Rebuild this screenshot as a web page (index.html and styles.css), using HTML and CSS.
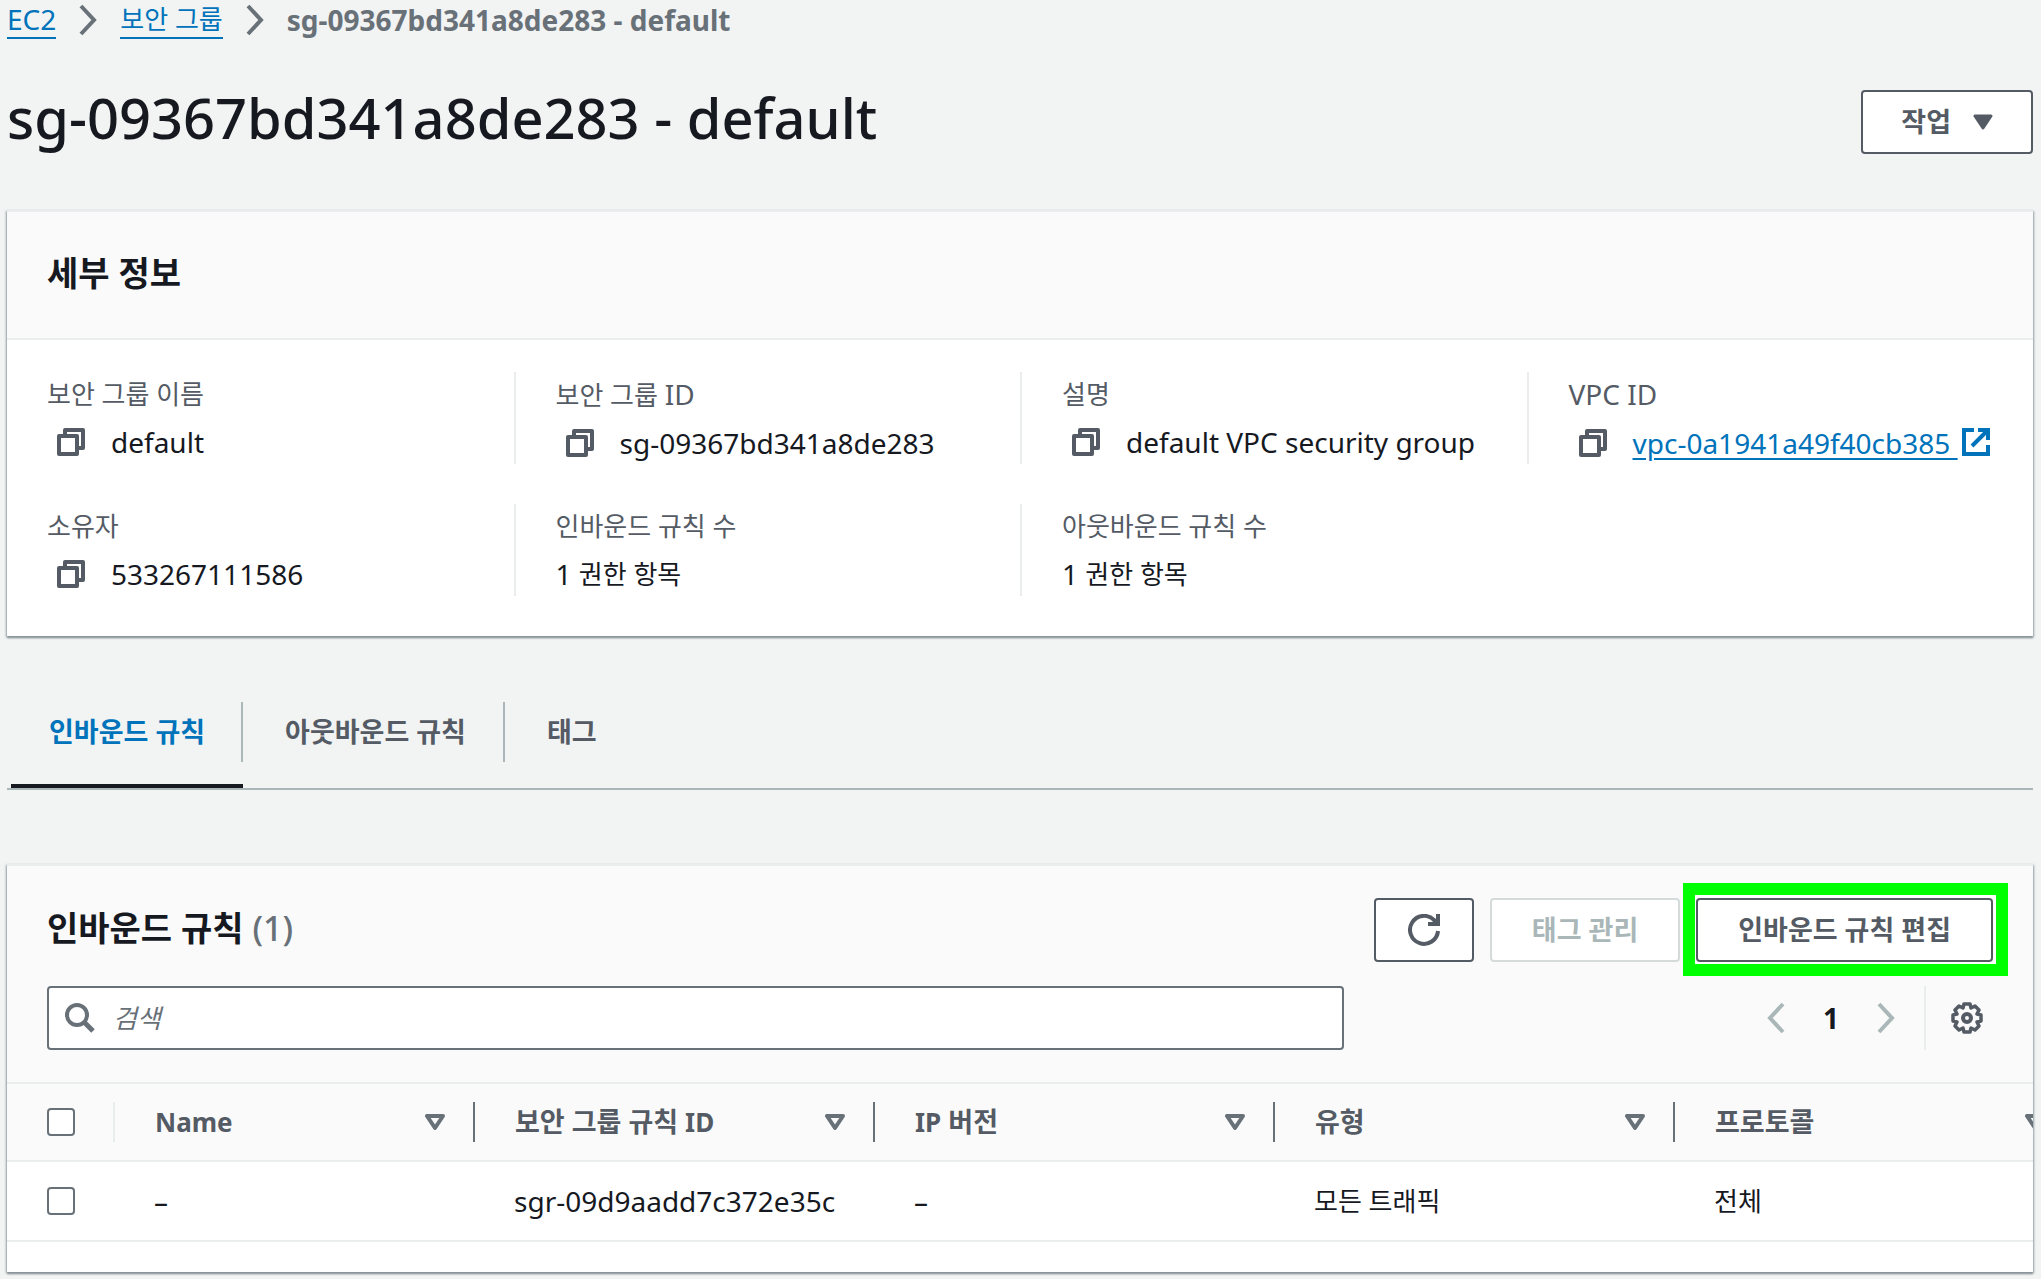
FILE: index.html
```html
<!DOCTYPE html>
<html lang="ko">
<head>
<meta charset="utf-8">
<title>sg-09367bd341a8de283 - default</title>
<link rel="stylesheet" href="styles.css">
</head>
<body>
<svg class="sprite" aria-hidden="true">
  <symbol id="i-copy" viewBox="0 0 28 28"><path d="M2 8h18v18H2zM8 8V2h18v18h-6" fill="none" stroke="currentColor" stroke-width="4" stroke-linejoin="round"/></symbol>
  <symbol id="i-sort" viewBox="0 0 20 18"><path d="M2 3h16l-8 12z" fill="none" stroke="currentColor" stroke-width="4" stroke-linejoin="round"/></symbol>
  <symbol id="i-next" viewBox="0 0 20 32"><path d="M3 2l13 14L3 30" fill="none" stroke="currentColor" stroke-width="4"/></symbol>
</svg>

<nav class="crumbs" aria-label="breadcrumb">
  <a class="crumb-link" href="#">EC2</a>
  <svg class="chevron"><use href="#i-next"/></svg>
  <a class="crumb-link ko" href="#">보안 그룹</a>
  <svg class="chevron"><use href="#i-next"/></svg>
  <span class="crumb-current">sg-09367bd341a8de283 - default</span>
</nav>

<main class="page">
  <header class="page-head">
    <h1 class="title">sg-09367bd341a8de283 - default</h1>
    <button class="btn btn-menu" type="button">작업
      <svg class="caret" viewBox="0 0 20 16"><path d="M2 2h16l-8 12z" fill="currentColor" stroke="currentColor" stroke-width="3" stroke-linejoin="round"/></svg>
    </button>
  </header>

  <section class="card">
    <header class="card-head"><h2 class="card-title">세부 정보</h2></header>
    <dl class="details">
      <div class="item"><dt class="label">보안 그룹 이름</dt><dd class="value"><button class="copy" type="button" aria-label="복사"><svg class="icon-small"><use href="#i-copy"/></svg></button>default</dd></div>
      <div class="item"><dt class="label">보안 그룹 <span class="latin">ID</span></dt><dd class="value"><button class="copy" type="button" aria-label="복사"><svg class="icon-small"><use href="#i-copy"/></svg></button>sg-09367bd341a8de283</dd></div>
      <div class="item"><dt class="label">설명</dt><dd class="value"><button class="copy" type="button" aria-label="복사"><svg class="icon-small"><use href="#i-copy"/></svg></button>default VPC security group</dd></div>
      <div class="item"><dt class="label"><span class="latin">VPC ID</span></dt><dd class="value"><button class="copy" type="button" aria-label="복사"><svg class="icon-small"><use href="#i-copy"/></svg></button><a class="link" href="#">vpc-0a1941a49f40cb385 <svg class="external" viewBox="0 0 28 28"><path d="M12 2H2v24h24v-9M16 2h10v10M26 2L10 18" fill="none" stroke="currentColor" stroke-width="4"/></svg></a></dd></div>
      <div class="item"><dt class="label">소유자</dt><dd class="value"><button class="copy" type="button" aria-label="복사"><svg class="icon-small"><use href="#i-copy"/></svg></button>533267111586</dd></div>
      <div class="item"><dt class="label">인바운드 규칙 수</dt><dd class="value ko"><span class="latin">1 </span>권한 항목</dd></div>
      <div class="item"><dt class="label">아웃바운드 규칙 수</dt><dd class="value ko"><span class="latin">1 </span>권한 항목</dd></div>
    </dl>
  </section>

  <div class="tabs" role="tablist">
    <button class="tab tab-active" type="button" role="tab" aria-selected="true"><span class="tab-text">인바운드 규칙</span></button>
    <button class="tab" type="button" role="tab" aria-selected="false"><span class="tab-text">아웃바운드 규칙</span></button>
    <button class="tab" type="button" role="tab" aria-selected="false"><span class="tab-text">태그</span></button>
  </div>

  <section class="card rules">
    <header class="rules-head">
      <div class="rules-row">
        <h2 class="card-title">인바운드 규칙 <span class="count">(1)</span></h2>
        <div class="actions">
          <button class="btn btn-icon" type="button" aria-label="새로 고침"><svg class="icon" viewBox="0 0 32 32"><path d="M30 17a14 14 0 1 1-4-11l4 4M30 0v10H20" fill="none" stroke="currentColor" stroke-width="4"/><path d="M30 3v7h-7z" fill="currentColor"/></svg></button>
          <button class="btn" type="button" disabled>태그 관리</button>
          <button class="btn btn-marked" type="button">인바운드 규칙 편집</button>
        </div>
      </div>
      <div class="rules-row">
        <div class="search">
          <svg class="icon" viewBox="0 0 32 32"><path d="M20 20l9 9" fill="none" stroke="currentColor" stroke-width="5"/><circle cx="13" cy="13" r="10" fill="none" stroke="currentColor" stroke-width="4"/></svg>
          <input class="search-input" type="text" placeholder="검색" aria-label="검색">
        </div>
        <div class="pager">
          <button class="page-btn" type="button" aria-label="이전" disabled><svg class="chevron flip"><use href="#i-next"/></svg></button>
          <span class="page-num">1</span>
          <button class="page-btn" type="button" aria-label="다음" disabled><svg class="chevron"><use href="#i-next"/></svg></button>
          <button class="settings" type="button" aria-label="설정"><svg class="icon" viewBox="0 0 32 32"><path d="M13 2h6l1 4 4-2 4 4-2 4 4 1v6l-4 1 2 4-4 4-4-2-1 4h-6l-1-4-4 2-4-4 2-4-4-1v-6l4-1-2-4 4-4 4 2z" fill="none" stroke="currentColor" stroke-width="3.5" stroke-linejoin="round"/><circle cx="16" cy="16" r="4" fill="none" stroke="currentColor" stroke-width="4"/></svg></button>
        </div>
      </div>
    </header>
    <div class="table-wrap">
      <table class="table">
        <thead>
          <tr>
            <th class="check-cell"><input class="check" type="checkbox" aria-label="모두 선택"></th>
            <th class="name-cell"><div class="th"><span class="th-latin">Name</span><svg class="sort"><use href="#i-sort"/></svg></div></th>
            <th><div class="th"><span>보안 그룹 규칙 <span class="th-latin">ID</span></span><svg class="sort"><use href="#i-sort"/></svg></div></th>
            <th><div class="th"><span><span class="th-latin">IP</span> 버전</span><svg class="sort"><use href="#i-sort"/></svg></div></th>
            <th><div class="th"><span>유형</span><svg class="sort"><use href="#i-sort"/></svg></div></th>
            <th><div class="th"><span>프로토콜</span><svg class="sort"><use href="#i-sort"/></svg></div></th>
          </tr>
        </thead>
        <tbody>
          <tr>
            <td class="check-cell"><input class="check" type="checkbox" aria-label="규칙 선택"></td>
            <td>–</td>
            <td>sgr-09d9aadd7c372e35c</td>
            <td>–</td>
            <td class="ko">모든 트래픽</td>
            <td class="ko">전체</td>
          </tr>
        </tbody>
      </table>
    </div>
  </section>
</main>
</body>
</html>
```
FILE: styles.css
```css
* { box-sizing: border-box; }
body {
  margin: 0;
  background: #f2f3f3;
  color: #16191f;
  font: 28px/44px "Noto Sans", "Noto Sans CJK KR", sans-serif;
}
button, input { font: inherit; color: inherit; margin: 0; }
h1, h2, dl, dd { margin: 0; }
.sprite { display: none; }
.ko { font-size: 26px; }
.latin { font-size: 28px; }
.icon { width: 32px; height: 32px; flex: none; }
.icon-small { width: 28px; height: 28px; flex: none; }
.chevron { width: 20px; height: 32px; flex: none; }
.flip { transform: scaleX(-1); }

.crumbs { display: flex; align-items: center; gap: 22px; height: 40px; padding: 0 7px; color: #687078; }
.crumb-link { color: #0073bb; text-decoration: none; border-bottom: 2px solid; line-height: 36px; }
.crumb-current { font-weight: 700; }

.page { padding: 0 8px 7px 7px; }
.page-head { display: flex; justify-content: space-between; align-items: flex-start; padding: 50px 0 56px; }
.title { font-size: 56px; line-height: 54px; font-weight: 500; }

.btn {
  display: inline-flex; align-items: center; justify-content: center; gap: 20px;
  height: 64px; padding: 0 40px;
  background: #fff; color: #545b64;
  border: 2px solid; border-radius: 4px;
  font-size: 27px; font-weight: 700; white-space: nowrap;
}
.btn:disabled { color: #aab7b8; border-color: #d5dbdb; }
.btn-icon { width: 100px; padding: 0; }
.btn-menu { gap: 22px; padding: 0 38px; }
.caret { width: 20px; height: 16px; }

/* highlight frame laid over the edit button */
.btn-marked { position: relative; box-shadow: 0 0 0 4px #fff; }
.btn-marked::after {
  content: ""; position: absolute; inset: -17px -17px -16px -15px;
  border: 12px solid #00ff00; pointer-events: none;
}

.card {
  background: #fff; border-top: 2px solid #eaeded;
  box-shadow: 0 2px 2px #879196, 1px 1px 2px #aab7b8, -1px 1px 2px #aab7b8;
}
.card-head { background: #fafafa; border-bottom: 2px solid #eaeded; padding: 38px 40px; }
.card-title { padding-bottom: 4px; font-size: 34px; line-height: 46px; font-weight: 700; }
.count { color: #687078; font-weight: 500; }

.details { display: grid; grid-template-columns: repeat(4, 1fr); row-gap: 40px; padding: 32px 0 40px; }
.item { padding-left: 40px; height: 92px; border-left: 2px solid #eaeded; white-space: nowrap; }
.item:nth-child(4n+1) { border-left: 0; }
.label { font-size: 26px; line-height: 44px; color: #545b64; }
.value { display: flex; align-items: center; height: 52px; white-space: pre; }
.copy { display: flex; padding: 0 26px 0 10px; border: 0; background: none; color: #545b64; }
.link { color: #0073bb; text-decoration: underline; text-underline-offset: 4px; }
.external { width: 28px; height: 28px; margin-left: 4px; vertical-align: -2px; }

.tabs { display: flex; margin-top: 66px; border-bottom: 2px solid #aab7b8; }
.tab { padding: 0 0 22px; border: 0; border-bottom: 4px solid transparent; background: none; color: #545b64; font-size: 27px; font-weight: 700; }
.tab-text { display: block; padding: 0 37px 0 42px; line-height: 60px; border-right: 2px solid #aab7b8; }
.tab:last-child .tab-text { border-right: 0; }
.tab-active { color: #0073bb; border-bottom-color: #16191f; margin-left: 4px; }
.tab-active .tab-text { padding: 0 36px 0 38px; }

.rules { margin-top: 74px; }
.rules-head { display: grid; gap: 24px; padding: 32px 40px; background: #fafafa; }
.rules-row { display: flex; justify-content: space-between; align-items: center; }
.actions { display: flex; gap: 16px; }
.search { display: flex; align-items: center; gap: 17px; width: calc(100% * 2 / 3); height: 64px; padding: 0 15px; background: #fff; border: 2px solid #687078; border-radius: 4px; color: #687078; }
.search-input { flex: 1; border: 0; outline: 0; padding: 0; background: none; font-size: 26px; }
.search-input::placeholder { color: #687078; font-style: italic; opacity: 1; }
.pager { display: flex; align-items: center; }
.page-btn { display: flex; padding: 0; border: 0; background: none; color: #aab7b8; }
.page-num { width: 90px; text-align: center; font-weight: 700; }
.settings { display: flex; align-items: center; height: 64px; margin-left: 28px; padding: 0 10px 0 25px; border: 0; border-left: 2px solid #eaeded; background: none; color: #545b64; }

.table-wrap { overflow: hidden; padding-bottom: 30px; }
.table { width: 2066px; table-layout: fixed; border-collapse: separate; border-spacing: 0; }
.table th { height: 80px; padding: 0; background: #fafafa; border-top: 2px solid #eaeded; border-bottom: 2px solid #eaeded; color: #545b64; font-size: 27px; text-align: left; }
.table td { height: 80px; padding: 0 0 0 41px; border-bottom: 2px solid #eaeded; }
.table .check-cell { width: 106px; padding-left: 40px; }
.table .name-cell { width: 360px; }
.th { display: flex; align-items: center; justify-content: space-between; height: 40px; padding: 0 28px 0 40px; border-left: 2px solid #687078; }
.name-cell .th { border-color: #eaeded; }
.th-latin { font-size: 26px; }
.sort { width: 20px; height: 18px; color: #687078; }
.check { display: block; appearance: none; width: 28px; height: 28px; border: 2px solid #687078; border-radius: 4px; background: #fff; }
```
